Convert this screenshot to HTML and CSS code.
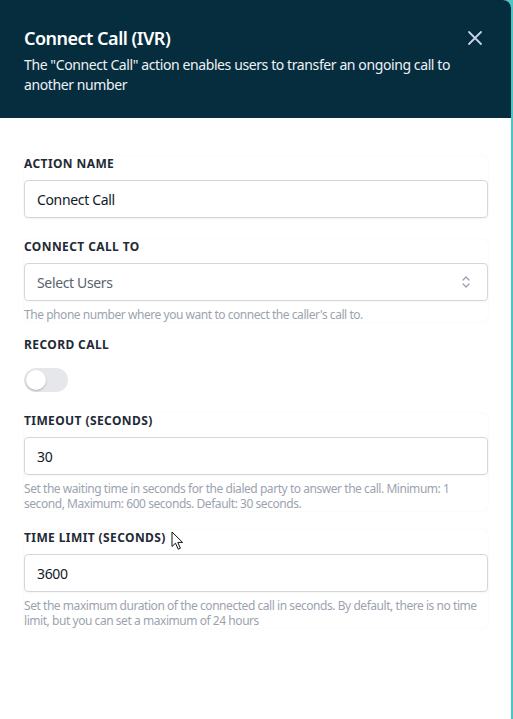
FILE: index.html
```html
<!DOCTYPE html>
<html lang="en">
<head>
<meta charset="utf-8">
<title>Connect Call (IVR)</title>
<link rel="stylesheet" href="styles.css">
</head>
<body>
<div class="panel">
  <header class="header">
    <div class="header-text">
      <h1 class="title">Connect Call (IVR)</h1>
      <p class="desc">The "Connect Call" action enables users to transfer an ongoing call to another number</p>
    </div>
    <button class="close" aria-label="Close">
      <svg width="16" height="16" viewBox="0 0 16 16" fill="none" stroke="currentColor" stroke-width="1.8" stroke-linecap="round"><path d="M2 2L14 14M14 2L2 14"/></svg>
    </button>
  </header>
  <div class="body">
    <div class="field card no-help">
      <label class="label">ACTION NAME</label>
      <div class="input">Connect Call</div>
    </div>
    <div class="field card">
      <label class="label">CONNECT CALL TO</label>
      <div class="input select">
        <span class="placeholder">Select Users</span>
        <svg class="chev" width="10" height="14" viewBox="0 0 10 14" fill="none" stroke="currentColor" stroke-width="1.3" stroke-linecap="round" stroke-linejoin="round"><path d="M2 5L5 2L8 5M2 9L5 12L8 9"/></svg>
      </div>
      <p class="help">The phone number where you want to connect the caller's call to.</p>
    </div>
    <div class="field no-help">
      <label class="label label-toggle">RECORD CALL</label>
      <div class="toggle"><span class="knob"></span></div>
    </div>
    <div class="field card two-line">
      <label class="label">TIMEOUT (SECONDS)</label>
      <div class="input">30</div>
      <p class="help">Set the waiting time in seconds for the dialed party to answer the call. Minimum: 1 second, Maximum: 600 seconds. Default: 30 seconds.</p>
    </div>
    <div class="field card">
      <label class="label">TIME LIMIT (SECONDS)</label>
      <div class="input">3600</div>
      <p class="help">Set the maximum duration of the connected call in seconds. By default, there is no time limit, but you can set a maximum of 24 hours</p>
    </div>
  </div>
  <svg class="cursor" width="14" height="20" viewBox="0 0 14 20"><path d="M1 1V15.5L4.5 12.2L7.2 18.2L9.4 17.2L6.8 11.4H11.6Z" fill="#fff" stroke="#111" stroke-width="1" stroke-linejoin="round"/></svg>
</div>
</body>
</html>
```

FILE: styles.css
```css
* { box-sizing: border-box; }
html, body { margin: 0; padding: 0; }
body {
  background: #46c9c6;
  font-family: "Noto Sans", "Open Sans", sans-serif;
  width: 513px;
  height: 719px;
  overflow: hidden;
}
.panel {
  position: relative;
  width: 511px;
  height: 719px;
  background: #ffffff;
  border-top-right-radius: 8px;
  overflow: hidden;
}
.header {
  background: #062d3e;
  color: #fff;
  height: 118px;
  padding: 26px 24px 0 24px;
  display: flex;
  justify-content: space-between;
  align-items: flex-start;
}
.header-text { width: 440px; }
.title {
  margin: 0;
  font-size: 18px;
  line-height: 24px;
  font-weight: 600;
  letter-spacing: -0.5px;
}
.desc {
  margin: 5px 0 0 0;
  font-size: 14px;
  line-height: 20px;
  color: #eef2f6;
  letter-spacing: -0.4px;
}
.close {
  background: none;
  border: 0;
  padding: 0;
  margin: 4px 4px 0 0;
  color: #c5d2ea;
  width: 16px;
  height: 16px;
  cursor: pointer;
}
.close svg { display: block; }
.body {
  padding: 38px 23px 0 24px;
  display: flex;
  flex-direction: column;
  gap: 15px;
}
.field { display: flex; flex-direction: column; }
.no-help { margin-bottom: 6px; }
.two-line { margin-bottom: 4px; }
.card {
  background: #fff;
  border-radius: 6px;
  box-shadow: 0 0 2px rgba(0,0,0,0.07);
}
.label {
  font-size: 12px;
  line-height: 16px;
  font-weight: 700;
  color: #1f2a37;
  margin-bottom: 8px;
  letter-spacing: 0.4px;
}
.label-toggle { margin-bottom: 15px; }
.input {
  height: 38px;
  border: 1px solid #d4d6dd;
  border-radius: 4px;
  padding: 0 12px;
  display: flex;
  align-items: center;
  font-size: 14px;
  color: #111827;
  letter-spacing: -0.35px;
  box-shadow: 0 1px 2px rgba(0,0,0,0.04);
}
.select { justify-content: space-between; padding-right: 16px; }
.placeholder { color: #5b6270; }
.chev { color: #9aa0ab; display: block; }
.help {
  margin: 6px 0 0 0;
  font-size: 12px;
  line-height: 15px;
  color: #9ca3af;
  letter-spacing: -0.45px;
}
.toggle {
  width: 44px;
  height: 24px;
  border-radius: 12px;
  background: #e5e7eb;
  position: relative;
}
.knob {
  position: absolute;
  top: 2px;
  left: 2px;
  width: 20px;
  height: 20px;
  border-radius: 50%;
  background: #fff;
  box-shadow: 0 1px 2px rgba(0,0,0,0.25);
}
.cursor {
  position: absolute;
  left: 171px;
  top: 531px;
}
```
